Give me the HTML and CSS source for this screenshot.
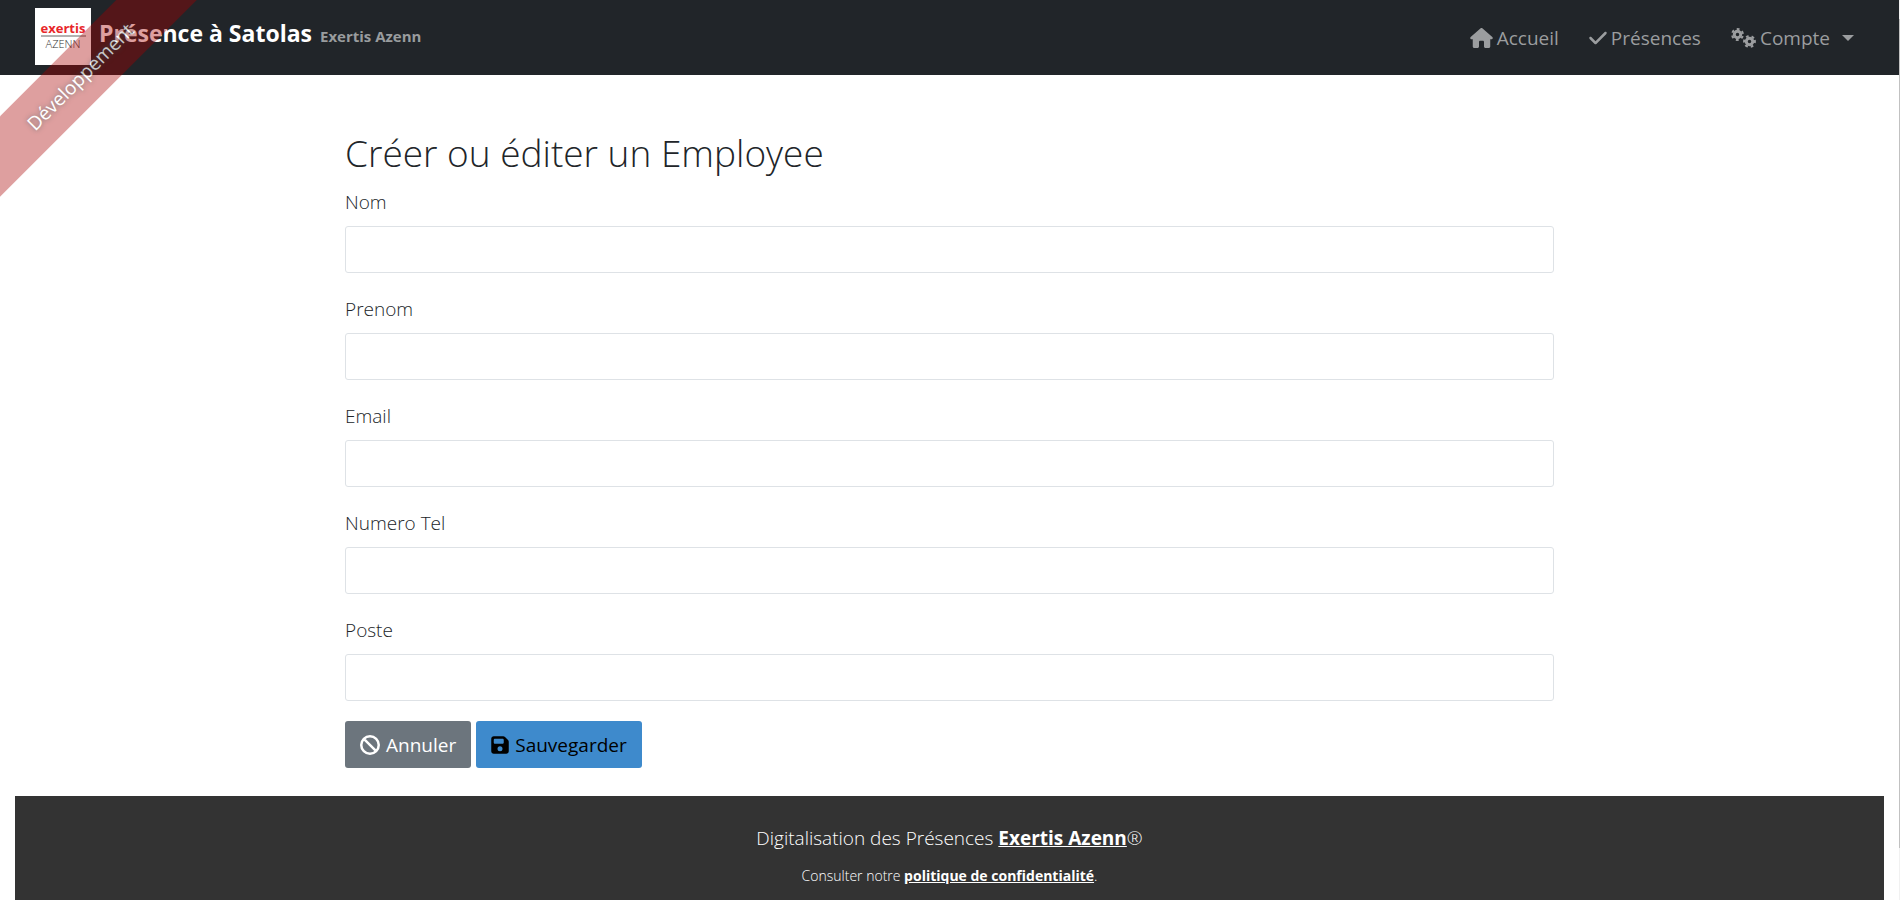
FILE: index.html
```html
<!DOCTYPE html>
<html lang="fr">
<head>
<meta charset="utf-8">
<meta name="viewport" content="width=device-width, initial-scale=1">
<title>Présence à Satolas</title>
<link rel="stylesheet" href="styles.css">
</head>
<body>
<div class="page">
  <div class="ribbon"><a href="#">Développement</a></div>
  <header class="navbar">
    <a class="brand" href="#">
      <svg class="brand-logo" viewBox="0 0 56 57" aria-hidden="true">
        <rect width="56" height="57" fill="#fff"/>
        <text class="logo-name" x="28" y="25" text-anchor="middle">exertis</text>
        <path d="M6 28h45" stroke="#999" stroke-width="1.5"/>
        <text class="logo-sub" x="28" y="40" text-anchor="middle">AZENN</text>
      </svg>
      <span class="brand-text">
        <span class="brand-title">Présence à Satolas</span>
        <span class="brand-version">Exertis Azenn</span>
      </span>
    </a>
    <nav class="menu">
      <a class="menu-link" href="#">
        <svg class="icon icon-home" viewBox="0 0 576 512" aria-hidden="true"><path fill="currentColor" d="M575.800 255.500c0 18-15 32.100-32 32.100h-32l.7 160.200c0 2.700-.2 5.400-.5 8.100V472c0 22.100-17.900 40-40 40H392c-22.100 0-40-17.900-40-40V360c0-17.700-14.300-32-32-32h-64c-17.700 0-32 14.300-32 32v112c0 22.100-17.900 40-40 40h-80c-22.100 0-40-17.900-40-40V287.600H32c-18 0-32-14-32-32.100 0-9 3-17 10-24L266.400 8c7-7 15-8 22-8s15 2 21 7l255.400 224.500c8 7 12 15 11 24z"/></svg>
        <span>Accueil</span>
      </a>
      <a class="menu-link" href="#">
        <svg class="icon icon-check" viewBox="0 0 448 512" aria-hidden="true"><path fill="currentColor" d="M438.600 105.400c12.500 12.500 12.500 32.800 0 45.300l-256 256c-12.500 12.500-32.800 12.500-45.300 0l-128-128c-12.500-12.500-12.500-32.800 0-45.300s32.800-12.500 45.300 0L160 338.700l233.400-233.300c12.500-12.500 32.800-12.500 45.300 0z"/></svg>
        <span>Présences</span>
      </a>
      <button class="menu-link" type="button">
        <svg class="icon icon-cogs" viewBox="0 0 50 40" aria-hidden="true">
          <g fill="none" stroke="currentColor">
            <circle cx="13" cy="13" r="6.500" stroke-width="6"/>
            <circle cx="13" cy="13" r="10.800" stroke-width="4" stroke-dasharray="5.650 5.650" transform="rotate(15 13 13)"/>
            <circle cx="37" cy="27" r="6.500" stroke-width="6"/>
            <circle cx="37" cy="27" r="10.800" stroke-width="4" stroke-dasharray="5.650 5.650" transform="rotate(-15 37 27)"/>
          </g>
        </svg>
        <span>Compte</span>
        <span class="caret"></span>
      </button>
    </nav>
  </header>
  <main class="content">
    <form class="form">
      <h1 class="form-title">Créer ou éditer un Employee</h1>
      <div class="field"><label for="nom">Nom</label><input id="nom" type="text"></div>
      <div class="field"><label for="prenom">Prenom</label><input id="prenom" type="text"></div>
      <div class="field"><label for="email">Email</label><input id="email" type="text"></div>
      <div class="field"><label for="tel">Numero Tel</label><input id="tel" type="text"></div>
      <div class="field"><label for="poste">Poste</label><input id="poste" type="text"></div>
      <div class="actions">
        <button class="btn btn-secondary" type="button">
          <svg class="icon icon-ban" viewBox="0 0 512 512" aria-hidden="true"><path fill="none" stroke="currentColor" stroke-width="64" d="M256 32a224 224 0 1 0 0 448a224 224 0 1 0 0-448zM98 98l316 316"/></svg>
          <span>Annuler</span>
        </button>
        <button class="btn btn-primary" type="submit">
          <svg class="icon icon-save" viewBox="0 0 448 512" aria-hidden="true"><path fill="currentColor" fill-rule="evenodd" d="M64 32C28.700 32 0 60.700 0 96v320c0 35.300 28.700 64 64 64h320c35.300 0 64-28.700 64-64V173.300c0-17-6.700-33.300-18.700-45.300L352 50.700C340 38.700 323.700 32 306.700 32H64zM64 128c0-17.700 14.300-32 32-32h192c17.700 0 32 14.300 32 32v64c0 17.700-14.300 32-32 32H96c-17.700 0-32-14.300-32-32v-64zM224 288a64 64 0 1 1 0 128 64 64 0 1 1 0-128z"/></svg>
          <span>Sauvegarder</span>
        </button>
      </div>
    </form>
  </main>
  <footer class="footer">
    <p class="footer-main">Digitalisation des Présences <a href="#">Exertis Azenn</a>®</p>
    <p class="footer-note">Consulter notre <a href="#">politique de confidentialité</a>.</p>
  </footer>
</div>
<div class="rail"><div class="rail-thumb"></div></div>
</body>
</html>
```
FILE: styles.css
```css
*, *::before, *::after { box-sizing: border-box; }

body {
  margin: 0;
  height: 100vh;
  overflow: hidden;
  display: grid;
  grid-template-columns: 1fr 1px;
  grid-template-rows: 100vh;
  background: #fff;
  color: #212529;
  font: 300 19px/30px "Open Sans", "Noto Sans", sans-serif;
}

.page {
  position: relative;
  overflow: hidden;
  display: flex;
  flex-direction: column;
}

.rail { background: #f1f1f1; padding: 19px 0 52px; }
.rail-thumb { height: 100%; background: #c1c1c1; }

/* Ribbon */
.ribbon {
  position: absolute;
  top: 48px;
  left: -70px;
  z-index: 10;
  width: 300px;
  padding: 14px 0 13px;
  background: rgba(170, 0, 0, 0.5);
  opacity: 0.75;
  text-align: center;
  transform: rotate(-45deg);
  pointer-events: none;
}
.ribbon a {
  color: #fff;
  font-weight: 400;
  text-decoration: none;
  text-shadow: 0 0 5px #444;
}

/* Navbar */
.navbar {
  flex: none;
  display: flex;
  align-items: center;
  justify-content: space-between;
  padding: 8px 45px 10px 35px;
  background: #212529;
}
.brand {
  display: flex;
  align-items: center;
  gap: 8px;
  color: #fff;
  font-weight: 700;
  text-decoration: none;
}
.brand-logo { width: 56px; height: 57px; }
.logo-name { font: 700 13px "Open Sans", sans-serif; fill: #e8262a; }
.logo-sub { font: 300 11px "Open Sans", sans-serif; fill: #333; }
.brand-text { display: flex; align-items: baseline; gap: 8px; padding-bottom: 4px; }
.brand-title { font-size: 23px; }
.brand-version { font-size: 15px; color: #999c9e; }

.menu { display: flex; gap: 30px; padding-top: 2px; }
.menu-link {
  display: flex;
  align-items: center;
  gap: 4px;
  padding: 0;
  border: 0;
  background: none;
  color: #9b9d9f;
  font: inherit;
  font-weight: 400;
  text-decoration: none;
}
.icon { flex: none; height: 20px; }
.icon-home { width: 23px; }
.icon-check { width: 18px; }
.icon-cogs { width: 25px; }
.icon-ban { width: 20px; }
.icon-save { width: 18px; }
.caret {
  margin-left: 8px;
  border: 6px solid transparent;
  border-top-color: currentColor;
  border-bottom: 0;
}

/* Form */
.content { flex: none; padding: 54px 35px 28px; }
.form { width: 66.1%; margin: 0 auto; }
.form-title { margin: 0 0 10px; font-size: 37px; line-height: 48px; font-weight: 300; }
.field { margin-bottom: 20px; }
.field label { display: block; padding-top: 1px; margin-bottom: 9px; }
.field:first-of-type label { padding-top: 0; }
.field input {
  display: block;
  width: 100%;
  height: 47px;
  padding: 8px 15px;
  border: 1px solid #dee2e6;
  border-radius: 3px;
  background: #fff;
  color: inherit;
  font: inherit;
}
.actions { display: flex; gap: 5px; }
.btn {
  display: flex;
  align-items: center;
  gap: 6px;
  height: 47px;
  padding: 1px 15px 0;
  border: 0;
  border-radius: 3px;
  font: inherit;
  font-weight: 400;
}
.btn-secondary { background: #6c757d; color: #fff; }
.btn-primary { background: #3e8acc; color: #000; }

/* Footer */
.footer {
  flex: 1;
  margin: 0 15px;
  padding: 27px 0 0;
  background: #333;
  color: #fff;
  text-align: center;
}
.footer p { margin: 0 0 8px; }
.footer a { color: #fff; font-weight: 700; }
.footer-main { font-size: 19px; }
.footer-note { font-size: 14px; }
```
